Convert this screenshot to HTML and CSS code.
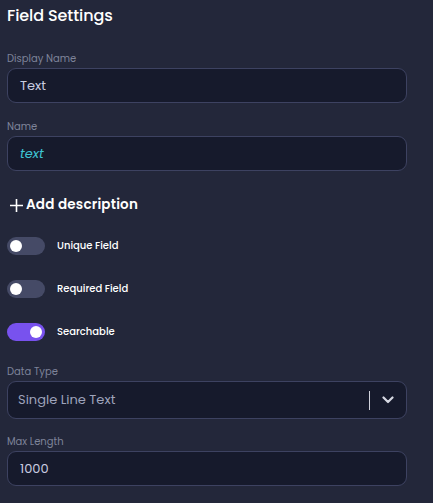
FILE: index.html
```html
<!DOCTYPE html>
<html>
<head>
<meta charset="utf-8">
<link rel="stylesheet" href="styles.css">
</head>
<body>
<div class="panel">
  <h1 class="title">Field Settings</h1>

  <div class="field">
    <label class="label">Display Name</label>
    <div class="input"><span class="value">Text</span></div>
  </div>

  <div class="field">
    <label class="label">Name</label>
    <div class="input"><span class="value code">text</span></div>
  </div>

  <div class="add-desc">
    <svg class="plus" width="15" height="15" viewBox="0 0 15 15"><path d="M7.5 1v13M1 7.5h13" stroke="#ffffff" stroke-width="1.6" fill="none"/></svg>
    <span>Add description</span>
  </div>

  <div class="toggles">
    <div class="toggle-row">
      <span class="switch"><span class="knob"></span></span>
      <span class="toggle-label">Unique Field</span>
    </div>
    <div class="toggle-row">
      <span class="switch"><span class="knob"></span></span>
      <span class="toggle-label">Required Field</span>
    </div>
    <div class="toggle-row">
      <span class="switch on"><span class="knob"></span></span>
      <span class="toggle-label">Searchable</span>
    </div>
  </div>

  <div class="field">
    <label class="label">Data Type</label>
    <div class="input select">
      <span class="value muted">Single Line Text</span>
      <span class="divider"></span>
      <svg class="chevron" width="12" height="8" viewBox="0 0 12 8"><path d="M1.5 1.5L6 6l4.5-4.5" stroke="#d6d8e2" stroke-width="2.2" fill="none" stroke-linecap="round" stroke-linejoin="round"/></svg>
    </div>
  </div>

  <div class="field tight">
    <label class="label">Max Length</label>
    <div class="input"><span class="value">1000</span></div>
  </div>
</div>
</body>
</html>
```

FILE: styles.css
```css
html, body {
  margin: 0;
  padding: 0;
  background: #23273a;
}
body {
  font-family: "Poppins", "Inter", "Noto Sans", sans-serif;
  color: #ffffff;
}
.panel {
  padding: 5px 26px 0 7px;
  display: flex;
  flex-direction: column;
}
.title {
  margin: 0;
  font-size: 16px;
  line-height: 22px;
  font-weight: 500;
  color: #ffffff;
  letter-spacing: -0.1px;
}
.field {
  display: flex;
  flex-direction: column;
  gap: 2px;
}
.title + .field { margin-top: 25px; }
.field + .field { margin-top: 17px; }
.field + .field.tight { margin-top: 16px; }
.label {
  font-size: 10px;
  line-height: 14px;
  color: #7e8399;
}
.input {
  height: 35px;
  box-sizing: border-box;
  border: 1px solid #3d4261;
  border-radius: 9px;
  background: #161a2c;
  display: flex;
  align-items: center;
  padding: 0 12px;
}
.value {
  font-size: 13px;
  color: #c9cde0;
}
.value.code {
  font-style: italic;
  color: #3ec3d3;
}
.value.muted {
  color: #9ea3bb;
  flex: 1;
}
.select {
  height: 38px;
  padding: 0 12px 0 10px;
}
.divider {
  width: 1px;
  height: 19px;
  background: #d0d2dc;
  margin-right: 12px;
}
.chevron { display: block; }
.add-desc {
  margin-top: 25px;
  display: flex;
  align-items: center;
  gap: 2px;
  padding-left: 2px;
  font-size: 13.5px;
  font-weight: 600;
  letter-spacing: 0.2px;
  line-height: 18px;
}
.toggles {
  margin-top: 23px;
  display: flex;
  flex-direction: column;
  gap: 25px;
}
.toggle-row {
  display: flex;
  align-items: center;
  gap: 12px;
}
.switch {
  width: 38px;
  height: 18px;
  border-radius: 9px;
  background: #454a66;
  display: flex;
  align-items: center;
  padding: 0 3px;
  box-sizing: border-box;
}
.switch.on {
  background: #7852ee;
  justify-content: flex-end;
}
.knob {
  width: 12px;
  height: 12px;
  border-radius: 50%;
  background: #ffffff;
}
.toggle-label {
  font-size: 10px;
  font-weight: 500;
  color: #ffffff;
}
.toggles + .field { margin-top: 24px; }
```
